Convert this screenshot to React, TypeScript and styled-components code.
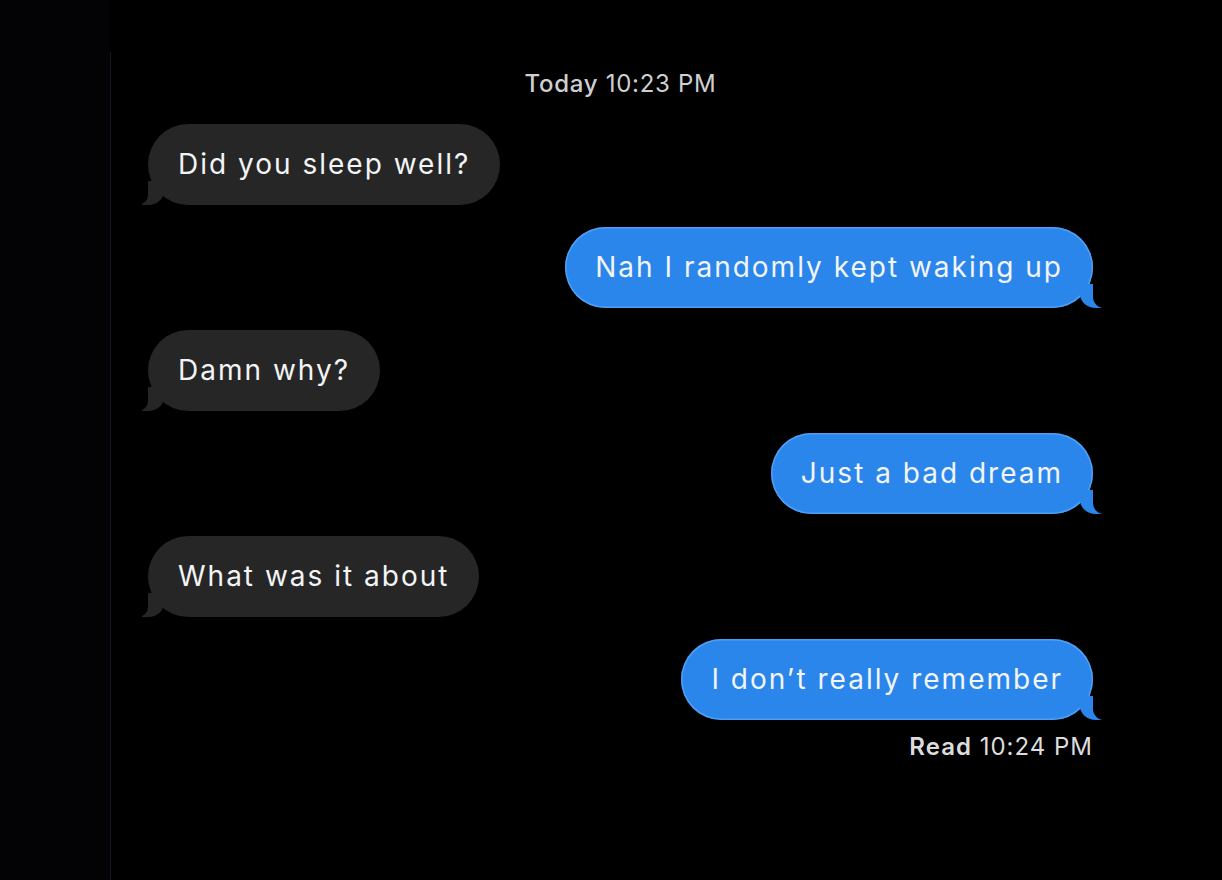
import React from "react";
import styled, { createGlobalStyle, css } from "styled-components";

const Global = createGlobalStyle`
  html, body { margin: 0; padding: 0; background: #000; }
  body { font-family: Inter, "Liberation Sans", Arial, sans-serif; -webkit-font-smoothing: antialiased; }
`;

const Page = styled.div`
  display: flex;
  width: 1222px;
  height: 880px;
  background: #000;
  overflow: hidden;
`;

const Gutter = styled.div`
  width: 110px;
  flex: none;
  background: #030306;
`;

const Panel = styled.main`
  flex: 1;
  margin-top: 52px;
  border-left: 1px solid #141626;
  padding: 14px 0 0 37px;
  box-sizing: border-box;
`;

const Thread = styled.div`
  width: 945px;
  display: flex;
  flex-direction: column;
  gap: 22px;
`;

const Stamp = styled.div`
  height: 36px;
  line-height: 36px;
  text-align: center;
  font-size: 24px;
  color: #cfcfd2;
  letter-spacing: 0.7px;
  b { font-weight: 500; }
`;

const Row = styled.div<{ $me?: boolean }>`
  display: flex;
  justify-content: ${(p) => (p.$me ? "flex-end" : "flex-start")};
`;

const Bubble = styled.div<{ $me?: boolean }>`
  position: relative;
  height: 81px;
  line-height: 81px;
  padding: 0 30px;
  border-radius: 41px;
  font-size: 28px;
  letter-spacing: 2px;
  white-space: nowrap;
  color: #f2f4f6;
  background: ${(p) => (p.$me ? "#2a86ea" : "#262626")};
  ${(p) =>
    p.$me &&
    css`
      box-shadow: inset 0 0 0 1.5px #4f9ef2;
    `}

  &::before {
    content: "";
    position: absolute;
    z-index: 0;
    bottom: 0;
    height: 24px;
    width: 22px;
    background: ${(p) => (p.$me ? "#2a86ea" : "#262626")};
    ${(p) =>
      p.$me
        ? css`
            right: -9px;
            border-bottom-left-radius: 16px 14px;
          `
        : css`
            left: -6px;
            border-bottom-right-radius: 16px 14px;
          `}
  }

  &::after {
    content: "";
    position: absolute;
    z-index: 1;
    bottom: 0;
    width: 22px;
    height: 24px;
    background: #000;
    ${(p) =>
      p.$me
        ? css`
            right: -22px;
            border-bottom-left-radius: 11px;
          `
        : css`
            left: -22px;
            border-bottom-right-radius: 10px;
          `}
  }
`;

const Receipt = styled.div`
  text-align: right;
  font-size: 24px;
  line-height: 30px;
  margin-top: -10px;
  color: #dcdcde;
  letter-spacing: 1px;
  b { font-weight: 600; }
`;

const messages: { me: boolean; text: string }[] = [
  { me: false, text: "Did you sleep well?" },
  { me: true, text: "Nah I randomly kept waking up" },
  { me: false, text: "Damn why?" },
  { me: true, text: "Just a bad dream" },
  { me: false, text: "What was it about" },
  { me: true, text: "I don\u2019t really remember" },
];

export default function App() {
  return (
    <>
      <Global />
      <Page>
        <Gutter />
        <Panel>
          <Thread>
            <Stamp>
              <b>Today</b> 10:23 PM
            </Stamp>
            {messages.map((m, i) => (
              <Row key={i} $me={m.me}>
                <Bubble $me={m.me}>{m.text}</Bubble>
              </Row>
            ))}
            <Receipt>
              <b>Read</b> 10:24 PM
            </Receipt>
          </Thread>
        </Panel>
      </Page>
    </>
  );
}
